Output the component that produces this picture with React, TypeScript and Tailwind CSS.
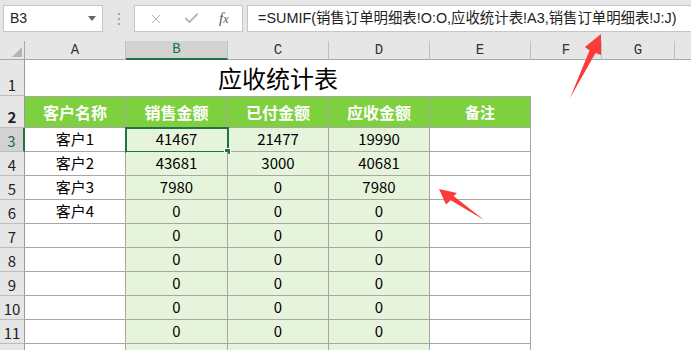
import { X, Check } from "lucide-react";

const rows = [
  { n: 3, a: "客户1", b: "41467", c: "21477", d: "19990" },
  { n: 4, a: "客户2", b: "43681", c: "3000", d: "40681" },
  { n: 5, a: "客户3", b: "7980", c: "0", d: "7980" },
  { n: 6, a: "客户4", b: "0", c: "0", d: "0" },
  { n: 7, a: "", b: "0", c: "0", d: "0" },
  { n: 8, a: "", b: "0", c: "0", d: "0" },
  { n: 9, a: "", b: "0", c: "0", d: "0" },
  { n: 10, a: "", b: "0", c: "0", d: "0" },
  { n: 11, a: "", b: "0", c: "0", d: "0" },
  { n: 12, a: "", b: "", c: "", d: "" },
];

function RowHead({ n, sel }: { n: number; sel?: boolean }) {
  return (
    <div
      className={
        sel
          ? "w-[25px] h-full shrink-0 bg-[#d2d2d2] border-b border-[#bdbdbd] border-r-2 border-r-[#217346] flex items-end justify-center pb-[1px] text-[15px] leading-[18px] text-[#217346]"
          : "w-[25px] h-full shrink-0 bg-[#e6e6e6] border-b border-[#bdbdbd] border-r border-r-[#9b9b9b] flex items-end justify-center pb-[1px] text-[15px] leading-[18px] text-[#222]"
      }
    >
      {n < 12 ? n : ""}
    </div>
  );
}

export default function App() {
  return (
    <div className="relative w-[691px] h-[350px] overflow-hidden bg-white font-['Noto_Sans_CJK_SC',sans-serif] text-black">
      {/* formula bar */}
      <div className="h-[41px] bg-[#e6e6e6] flex items-start pt-[5px] pl-[3px]">
        <div className="w-[100px] h-[27px] bg-white border border-[#c6c6c6] flex items-center justify-between pl-[6px] pr-[6px]">
          <span className="font-['Liberation_Sans',sans-serif] text-[14px] text-[#222]">B3</span>
          <svg width="8" height="5" viewBox="0 0 8 5">
            <path d="M0 0H8L4 5Z" fill="#666" />
          </svg>
        </div>
        <div className="w-[31px] h-[27px] flex flex-col items-center justify-center gap-[3px]">
          <span className="w-[2px] h-[2px] bg-[#a6a6a6]" />
          <span className="w-[2px] h-[2px] bg-[#a6a6a6]" />
          <span className="w-[2px] h-[2px] bg-[#a6a6a6]" />
        </div>
        <div className="w-[109px] h-[27px] bg-white border border-[#c6c6c6] flex items-center justify-around px-[4px]">
          <X size={16} strokeWidth={1.5} color="#b4b4b4" />
          <Check size={17} strokeWidth={2.5} color="#b4b4b4" />
          <span className="font-['Liberation_Serif',serif] italic text-[15px] text-[#555]">
            f<span className="text-[12px]">x</span>
          </span>
        </div>
        <div className="flex-1 ml-[4px] h-[27px] bg-white border border-[#c6c6c6] border-r-0 flex items-center pl-[10px] font-['Liberation_Sans','Noto_Sans_CJK_SC',sans-serif] text-[14.4px] text-[#222] whitespace-nowrap">
          =SUMIF(销售订单明细表!O:O,应收统计表!A3,销售订单明细表!J:J)
        </div>
      </div>

      {/* column headers */}
      <div className="h-[19px] flex bg-[#e6e6e6] font-['Liberation_Mono',monospace] text-[14px] text-[#333]">
        <div className="w-[25px] h-full shrink-0 border-r border-b border-[#a6a6a6] flex items-end justify-end p-[2px]">
          <svg width="10" height="10" viewBox="0 0 10 10">
            <path d="M10 0V10H0Z" fill="#b4b4b4" />
          </svg>
        </div>
        <div className="w-[101px] h-full shrink-0 border-r border-r-[#c0c0c0] border-b border-b-[#a6a6a6] flex items-center justify-center">A</div>
        <div className="w-[102px] h-full shrink-0 bg-[#d2d2d2] border-r border-r-[#c0c0c0] border-b-2 border-b-[#217346] flex items-center justify-center text-[#217346]">B</div>
        <div className="w-[101px] h-full shrink-0 border-r border-r-[#c0c0c0] border-b border-b-[#a6a6a6] flex items-center justify-center">C</div>
        <div className="w-[101px] h-full shrink-0 border-r border-r-[#c0c0c0] border-b border-b-[#a6a6a6] flex items-center justify-center">D</div>
        <div className="w-[101px] h-full shrink-0 border-r border-r-[#c0c0c0] border-b border-b-[#a6a6a6] flex items-center justify-center">E</div>
        <div className="w-[71px] h-full shrink-0 border-r border-r-[#c0c0c0] border-b border-b-[#a6a6a6] flex items-center justify-center">F</div>
        <div className="w-[73px] h-full shrink-0 border-r border-r-[#c0c0c0] border-b border-b-[#a6a6a6] flex items-center justify-center">G</div>
        <div className="flex-1 h-full border-b border-b-[#a6a6a6]" />
      </div>

      {/* row 1: title */}
      <div className="h-[36px] flex">
        <RowHead n={1} />
        <div className="w-[506px] h-full shrink-0 flex items-center justify-center text-[24px] leading-none">应收统计表</div>
      </div>

      {/* row 2: header */}
      <div className="h-[32px] flex font-bold text-white">
        <RowHead n={2} />
        <div className="w-[101px] h-full shrink-0 bg-[#7ed03e] border-t border-r border-b border-[#a6a6a6] flex items-center justify-center text-[16px]">客户名称</div>
        <div className="w-[102px] h-full shrink-0 bg-[#7ed03e] border-t border-r border-b border-[#a6a6a6] flex items-center justify-center text-[16px]">销售金额</div>
        <div className="w-[101px] h-full shrink-0 bg-[#7ed03e] border-t border-r border-b border-[#a6a6a6] flex items-center justify-center text-[16px]">已付金额</div>
        <div className="w-[101px] h-full shrink-0 bg-[#7ed03e] border-t border-r border-b border-[#a6a6a6] flex items-center justify-center text-[16px]">应收金额</div>
        <div className="w-[101px] h-full shrink-0 bg-[#7ed03e] border-t border-r border-b border-[#a6a6a6] flex items-center justify-center text-[15px]">备注</div>
      </div>

      {/* data rows */}
      {rows.map((r) => (
        <div key={r.n} className="h-[24px] flex text-[15px]">
          <RowHead n={r.n} sel={r.n === 3} />
          <div className="w-[101px] h-full shrink-0 border-r border-b border-[#a6a6a6] flex items-center justify-center">{r.a}</div>
          <div className="relative w-[102px] h-full shrink-0 bg-[#e7f4dc] border-r border-b border-[#a6a6a6] flex items-center justify-center">
            {r.b}
            {r.n === 3 && (
              <>
                <div className="absolute left-[-1px] top-[-1px] w-[104px] h-[26px] border-2 border-[#217346]" />
                <div className="absolute right-[-4px] bottom-[-4px] w-[7px] h-[7px] bg-[#217346] border border-white" />
              </>
            )}
          </div>
          <div className="w-[101px] h-full shrink-0 bg-[#e7f4dc] border-r border-b border-[#a6a6a6] flex items-center justify-center">{r.c}</div>
          <div className="w-[101px] h-full shrink-0 bg-[#e7f4dc] border-r border-b border-[#a6a6a6] flex items-center justify-center">{r.d}</div>
          <div className="w-[101px] h-full shrink-0 border-r border-b border-[#a6a6a6]" />
        </div>
      ))}

      {/* annotation arrows */}
      <svg className="absolute left-0 top-0 pointer-events-none" width="691" height="350" viewBox="0 0 691 350">
        <polygon points="601,34 601,55 595.5,53 570,98 589.5,50.5 585,47" fill="#fb3a3a" />
        <polygon points="439,189 457,193 453.6,196 484,220 450.8,200.2 446,204.5" fill="#fb3a3a" />
      </svg>
    </div>
  );
}
